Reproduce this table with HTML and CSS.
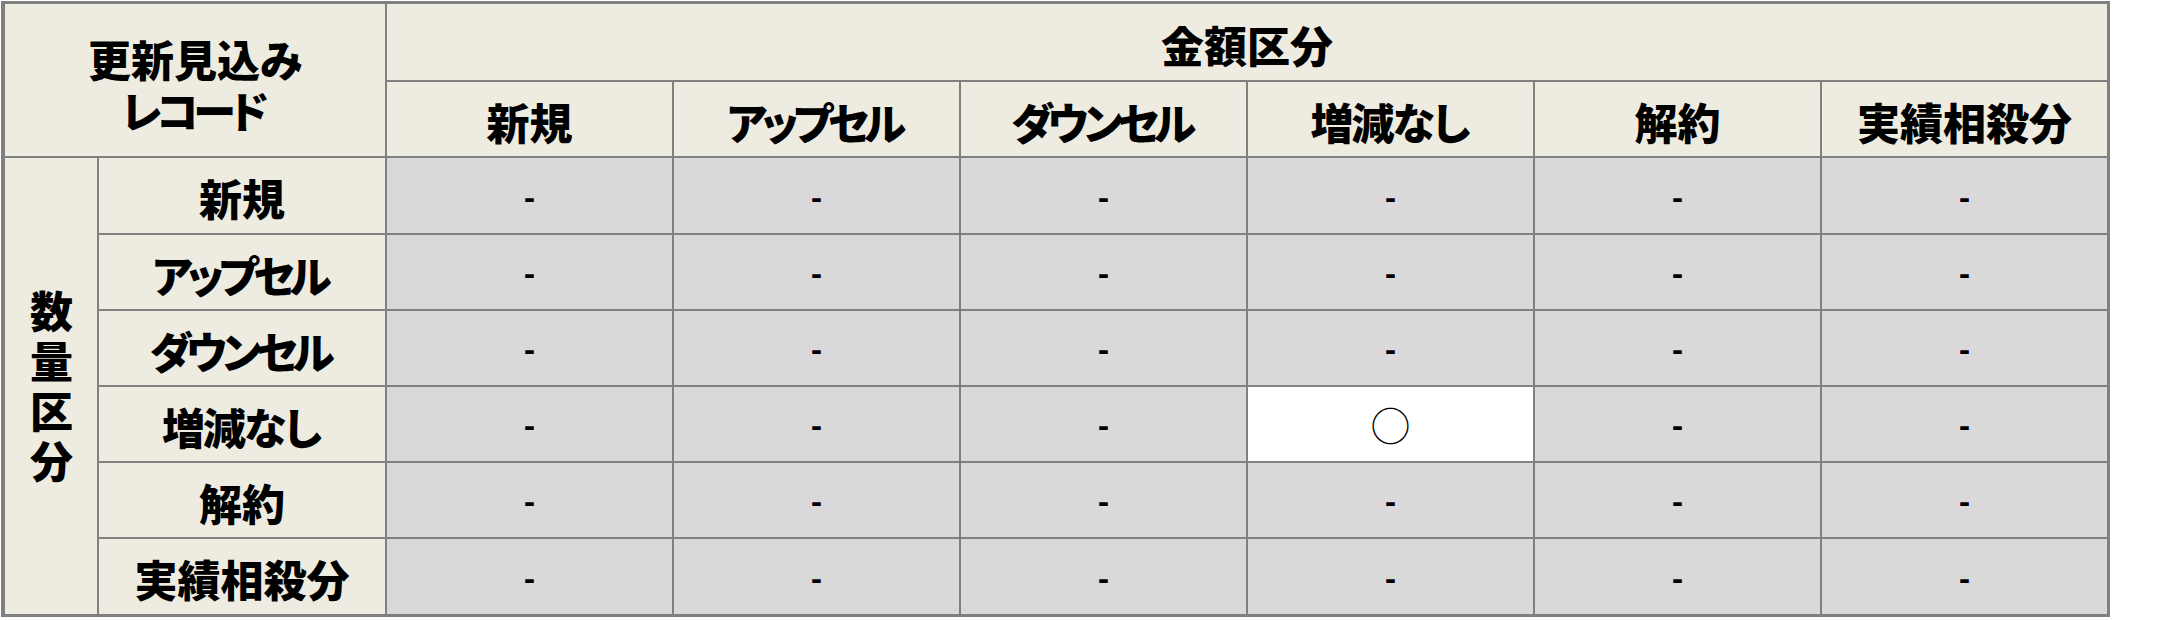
FILE: index.html
```html
<!DOCTYPE html>
<html lang="ja">
<head>
<meta charset="utf-8">
<title>更新見込みレコード</title>
<link rel="stylesheet" href="styles.css">
</head>
<body>
<div class="matrix">
  <div class="cell head corner"><span>更新見込み</span><span class="kana">レコード</span></div>
  <div class="cell head group">金額区分</div>
  <div class="cell head">新規</div>
  <div class="cell head"><span class="kana">アップセル</span></div>
  <div class="cell head"><span class="kana">ダウンセル</span></div>
  <div class="cell head"><span class="mixed">増減なし</span></div>
  <div class="cell head">解約</div>
  <div class="cell head">実績相殺分</div>

  <div class="cell head side"><span class="vertical">数量区分</span></div>

  <div class="cell head">新規</div>
  <div class="cell data">-</div><div class="cell data">-</div><div class="cell data">-</div><div class="cell data">-</div><div class="cell data">-</div><div class="cell data">-</div>

  <div class="cell head"><span class="kana">アップセル</span></div>
  <div class="cell data">-</div><div class="cell data">-</div><div class="cell data">-</div><div class="cell data">-</div><div class="cell data">-</div><div class="cell data">-</div>

  <div class="cell head"><span class="kana">ダウンセル</span></div>
  <div class="cell data">-</div><div class="cell data">-</div><div class="cell data">-</div><div class="cell data">-</div><div class="cell data">-</div><div class="cell data">-</div>

  <div class="cell head"><span class="mixed">増減なし</span></div>
  <div class="cell data">-</div><div class="cell data">-</div><div class="cell data">-</div><div class="cell data on"><span class="mark">○</span></div><div class="cell data">-</div><div class="cell data">-</div>

  <div class="cell head">解約</div>
  <div class="cell data">-</div><div class="cell data">-</div><div class="cell data">-</div><div class="cell data">-</div><div class="cell data">-</div><div class="cell data">-</div>

  <div class="cell head">実績相殺分</div>
  <div class="cell data">-</div><div class="cell data">-</div><div class="cell data">-</div><div class="cell data">-</div><div class="cell data">-</div><div class="cell data">-</div>
</div>
</body>
</html>
```

FILE: styles.css
```css
html, body {
  margin: 0;
  padding: 0;
  background: #ffffff;
}

body {
  padding: 1px 0 0 1px;
}

.matrix {
  display: grid;
  width: 2109px;
  box-sizing: border-box;
  grid-template-columns: 92px 286px repeat(6, 285px);
  grid-template-rows: 76px 74px 75px 74px 74px 74px 74px 75px;
  gap: 2px;
  padding: 3px 3px 3px 4px;
  background: #808080;
  font-family: "Noto Sans CJK JP", "Noto Sans", sans-serif;
  color: #000000;
}

.cell {
  display: flex;
  align-items: center;
  justify-content: center;
  text-align: center;
}

.head {
  background: #eeece1;
  font-size: 43px;
  font-weight: 900;
  font-feature-settings: "palt";
  line-height: 1;
  padding-top: 4px;
  box-sizing: border-box;
}

.kana {
  letter-spacing: -5px;
  padding-right: 5px;
}

.mixed {
  letter-spacing: -2px;
  padding-right: 2px;
}

.corner {
  grid-column: 1 / span 2;
  grid-row: 1 / span 2;
  flex-direction: column;
  gap: 8px;
  padding-top: 8px;
}

.group {
  grid-column: 3 / span 6;
}

.side {
  grid-row: 3 / span 6;
  padding-top: 0;
}

.vertical {
  writing-mode: vertical-rl;
  text-orientation: upright;
  letter-spacing: 7px;
  margin-top: 7px;
}

.data {
  background: #d9d9d9;
  font-size: 30px;
  font-weight: 900;
  line-height: 1;
}

.data.on {
  background: #ffffff;
}

.mark {
  font-size: 40px;
  font-weight: 300;
  line-height: 1;
}
```
